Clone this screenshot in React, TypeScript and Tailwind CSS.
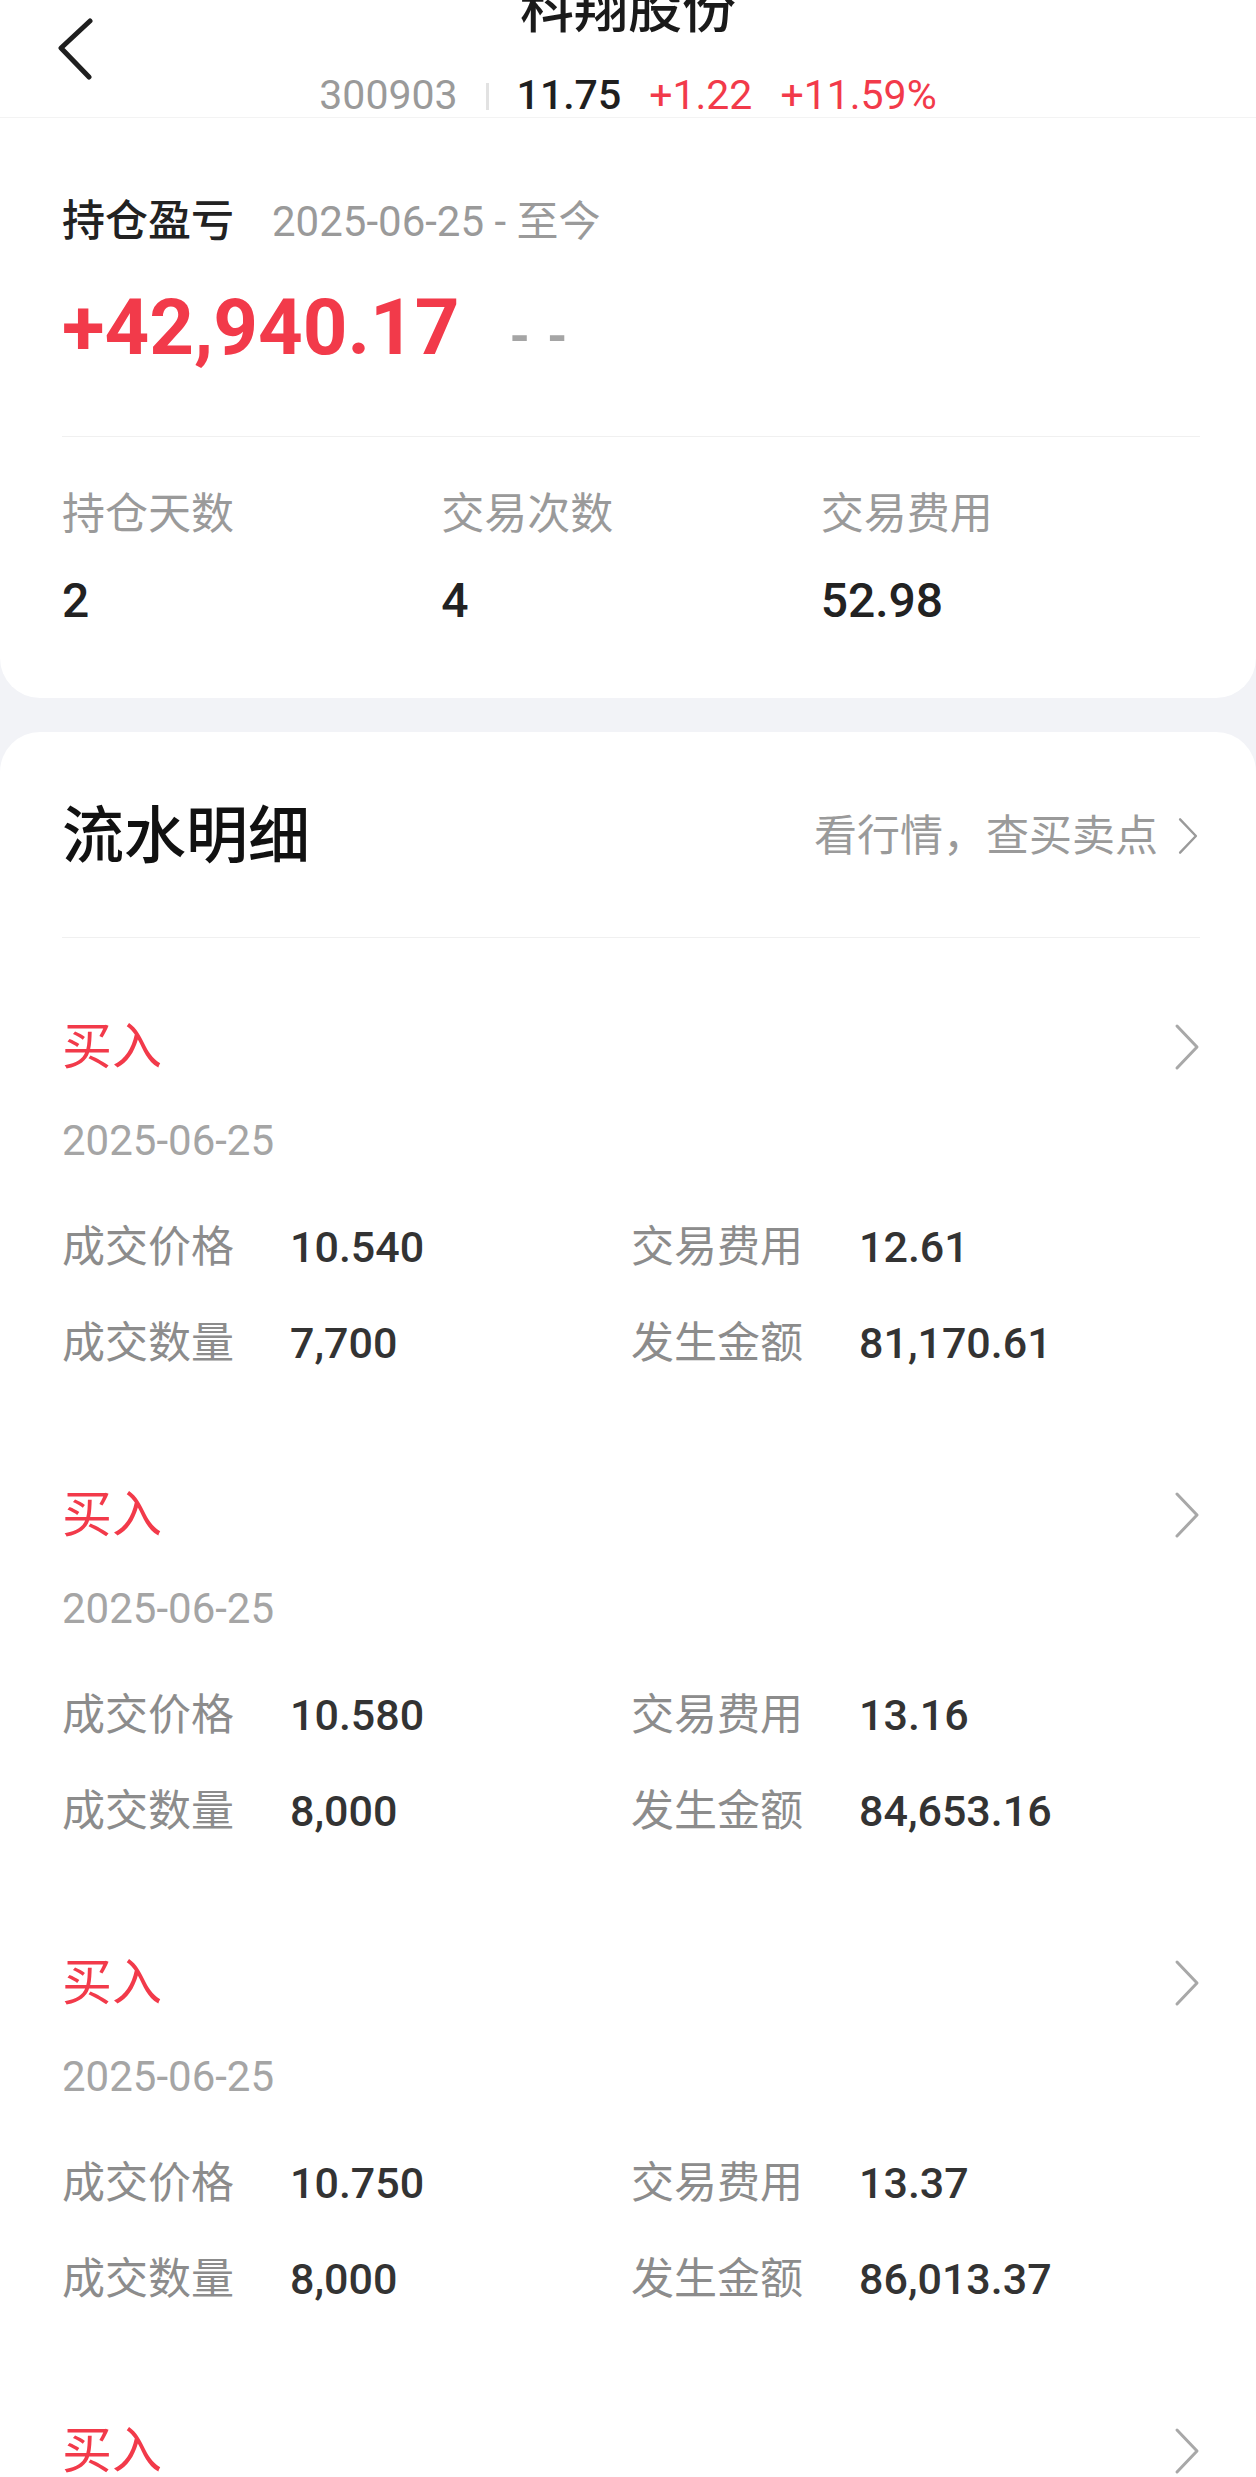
import React from 'react';

interface Trade {
  side: string;
  date: string;
  price: string;
  fee: string;
  qty: string;
  amount: string;
}

const trades: Trade[] = [
  { side: '买入', date: '2025-06-25', price: '10.540', fee: '12.61', qty: '7,700', amount: '81,170.61' },
  { side: '买入', date: '2025-06-25', price: '10.580', fee: '13.16', qty: '8,000', amount: '84,653.16' },
  { side: '买入', date: '2025-06-25', price: '10.750', fee: '13.37', qty: '8,000', amount: '86,013.37' },
  { side: '买入', date: '2025-06-24', price: '10.600', fee: '13.84', qty: '8,000', amount: '84,813.84' },
];

function ChevronRight({ className }: { className?: string }) {
  return (
    <svg viewBox="0 0 26 48" className={className} fill="none" stroke="currentColor" strokeWidth={3} strokeLinecap="round" strokeLinejoin="round">
      <polyline points="3,3 23,24 3,45" />
    </svg>
  );
}

function Field({ label, value }: { label: string; value: string }) {
  return (
    <div className="flex items-center h-[50px]">
      <span className="w-[228px] text-[43px] text-[#8c8c8c]">{label}</span>
      <span className="text-[43px] font-medium text-[#333333]">{value}</span>
    </div>
  );
}

export default function App() {
  return (
    <div className="min-h-screen bg-[#f2f3f7] font-['Roboto','Noto_Sans_CJK_SC',sans-serif] overflow-hidden">
      {/* Haut : entête + résumé */}
      <section className="bg-white rounded-b-[40px]">
        <header className="h-[118px] border-b border-[#f3f3f3] grid grid-cols-[1fr_auto_1fr]">
          <div className="pl-[58px] pt-[18px]">
            <svg viewBox="0 0 36 64" className="w-[36px] h-[64px] text-[#1f1f1f]" fill="none" stroke="currentColor" strokeWidth={5} strokeLinecap="round" strokeLinejoin="round">
              <polyline points="32,3 3,30 31,59" />
            </svg>
          </div>
          <div className="flex flex-col items-center -mt-[20px]">
            <h1 className="h-[60px] leading-[60px] text-[54px] font-medium text-[#1a1a1a]">科翔股份</h1>
            <div className="mt-[31px] h-[50px] flex items-center gap-[28px] text-[41px]">
              <span className="text-[#9a9a9a]">300903</span>
              <span className="w-[3px] h-[27px] bg-[#e2e2e2]" />
              <span className="text-[#1f1f1f] font-medium">11.75</span>
              <span className="text-[#f23a4a]">+1.22</span>
              <span className="text-[#f23a4a]">+11.59%</span>
            </div>
          </div>
          <div />
        </header>

        <div className="pl-[62px] pr-[56px] pt-[78px] pb-[67px]">
          <div className="flex items-center h-[50px] gap-[38px]">
            <span className="text-[43px] font-medium text-[#222222]">持仓盈亏</span>
            <span className="text-[42px] text-[#9a9a9a]">2025-06-25 - 至今</span>
          </div>
          <div className="mt-[37px] h-[90px] flex items-baseline">
            <span className="text-[78px] leading-[90px] font-bold text-[#f23a4a]">+42,940.17</span>
            <span className="ml-[50px] text-[52px] font-bold tracking-[2px] text-[#a5a5a5]">- -</span>
          </div>
          <div className="mt-[63px] h-px bg-[#f0f0f0]" />
          <div className="mt-[52px] grid grid-cols-3">
            {[
              ['持仓天数', '2'],
              ['交易次数', '4'],
              ['交易费用', '52.98'],
            ].map(([label, value]) => (
              <div key={label}>
                <div className="h-[50px] leading-[50px] text-[43px] text-[#9a9a9a]">{label}</div>
                <div className="mt-[32px] h-[60px] leading-[60px] text-[48px] font-medium text-[#222222]">{value}</div>
              </div>
            ))}
          </div>
        </div>
      </section>

      {/* Flux */}
      <section className="mt-[34px] bg-white rounded-t-[40px] pl-[62px] pr-[56px] pt-[64px]">
        <div className="h-[80px] flex items-center justify-between">
          <h2 className="text-[62px] font-medium text-[#111111]">流水明细</h2>
          <div className="flex items-center text-[#9a9a9a]">
            <span className="text-[43px]">看行情，查买卖点</span>
            <ChevronRight className="ml-[18px] w-[24px] h-[38px]" />
          </div>
        </div>
        <div className="mt-[61px] h-px bg-[#f0f0f0]" />

        <div className="mt-[79px]">
          {trades.map((t, i) => (
            <div key={i} className="pb-[117px]">
              <div className="h-[60px] flex items-center justify-between">
                <span className="text-[50px] text-[#f23a4a]">{t.side}</span>
                <ChevronRight className="w-[26px] h-[48px] text-[#a8a8a8]" />
              </div>
              <div className="mt-[39px] h-[50px] leading-[50px] text-[42px] text-[#a5a5a5]">{t.date}</div>
              <div className="mt-[56px] grid grid-cols-2">
                <Field label="成交价格" value={t.price} />
                <Field label="交易费用" value={t.fee} />
              </div>
              <div className="mt-[46px] grid grid-cols-2">
                <Field label="成交数量" value={t.qty} />
                <Field label="发生金额" value={t.amount} />
              </div>
            </div>
          ))}
        </div>
      </section>
    </div>
  );
}
